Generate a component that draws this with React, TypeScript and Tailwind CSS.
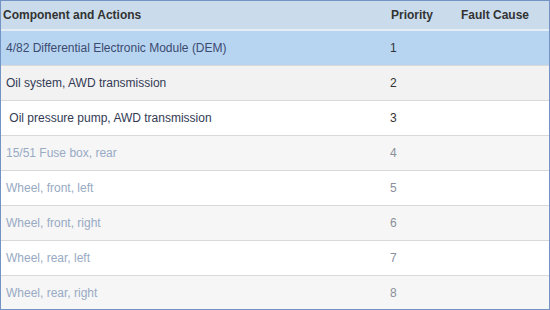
const rows = [
  { name: "4/82 Differential Electronic Module (DEM)", prio: 1, tone: "selected" },
  { name: "Oil system, AWD transmission", prio: 2, tone: "dark" },
  { name: "\u00a0Oil pressure pump, AWD transmission", prio: 3, tone: "dark" },
  { name: "15/51 Fuse box, rear", prio: 4, tone: "muted" },
  { name: "Wheel, front, left", prio: 5, tone: "muted" },
  { name: "Wheel, front, right", prio: 6, tone: "muted" },
  { name: "Wheel, rear, left", prio: 7, tone: "muted" },
  { name: "Wheel, rear, right", prio: 8, tone: "muted" },
];

export default function App() {
  return (
    <div className="w-[550px] h-[310px] bg-white font-['Liberation_Sans',Arial,sans-serif] text-[12px]">
      <div className="h-full border border-[#7393c4] overflow-hidden">
        <table className="w-full border-collapse table-fixed">
          <colgroup>
            <col className="w-[386px]" />
            <col className="w-[70px]" />
            <col />
          </colgroup>
          <thead>
            <tr className="h-[29px] bg-[#cadcec] border-b-2 border-[#e4ecf4] text-[#333] font-bold">
              <th className="text-left pl-[2px] font-bold">Component and Actions</th>
              <th className="text-left pl-[4px] font-bold">Priority</th>
              <th className="text-left pl-[4px] font-bold">Fault Cause</th>
            </tr>
          </thead>
          <tbody>
            {rows.map((r, i) => {
              const bg =
                r.tone === "selected"
                  ? "bg-[#b7d5f0]"
                  : i === 1
                  ? "bg-[#f2f2f2]"
                  : i % 2 === 1
                  ? "bg-[#f6f6f6]"
                  : "bg-white";
              const nameColor =
                r.tone === "selected"
                  ? "text-[#3b4a70]"
                  : r.tone === "dark"
                  ? "text-[#333a55]"
                  : "text-[#98aac4]";
              const numColor =
                r.tone === "muted" ? "text-[#8a8f99]" : "text-[#333]";
              return (
                <tr key={r.prio} className={`h-[35px] border-b border-[#d9d9d9] ${bg}`}>
                  <td className={`pl-[5px] whitespace-pre ${nameColor}`}>{r.name}</td>
                  <td className={`pl-[3px] ${numColor}`}>{r.prio}</td>
                  <td></td>
                </tr>
              );
            })}
          </tbody>
        </table>
      </div>
    </div>
  );
}
